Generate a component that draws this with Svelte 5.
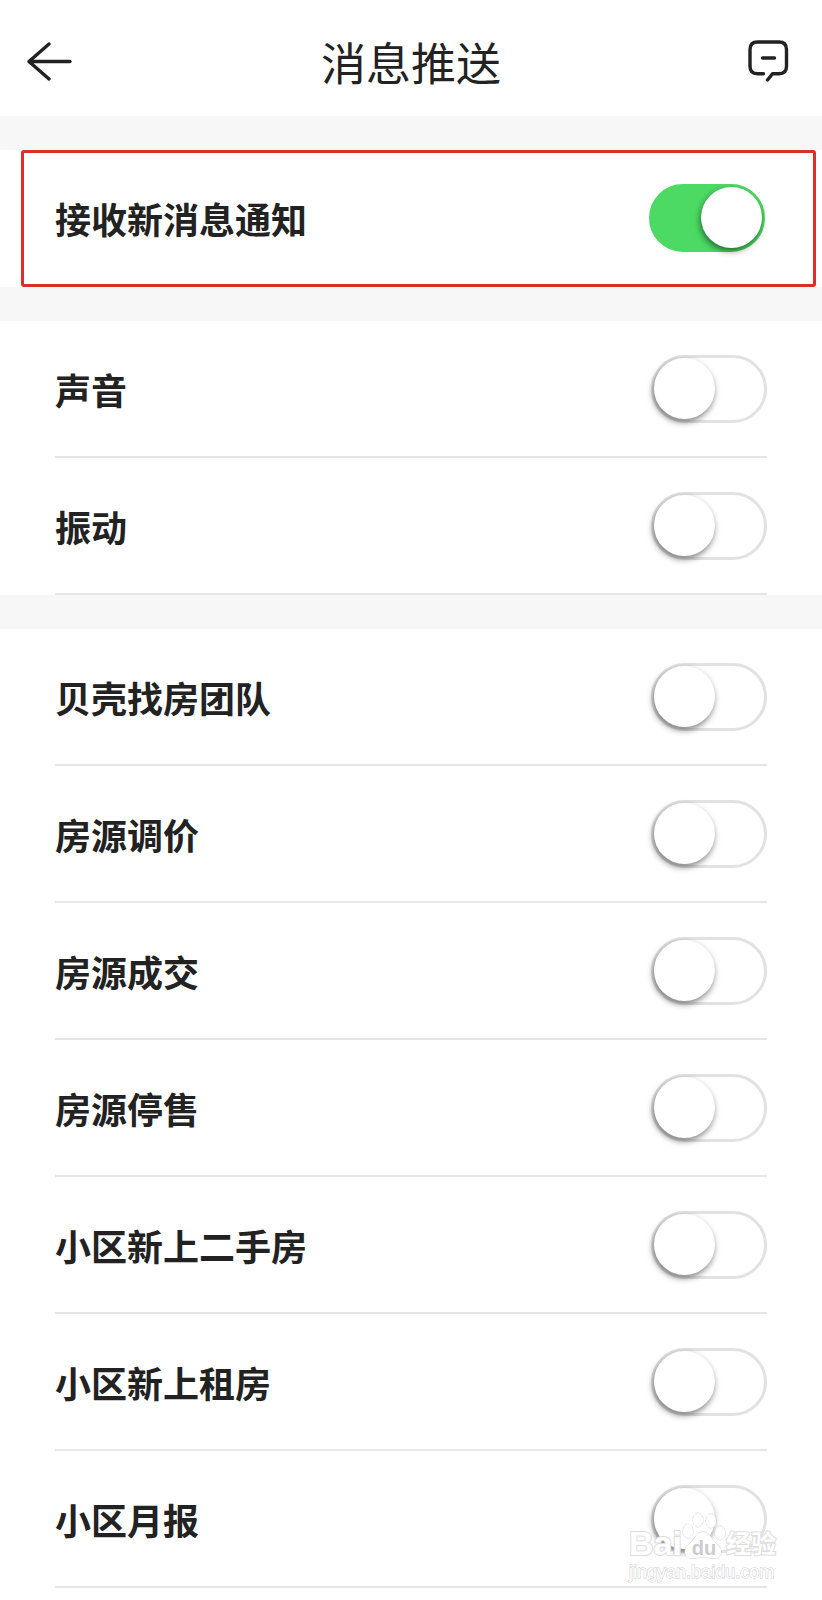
<script>
  let groups = $state([
    {
      marked: true,
      items: [{ id: 'all', label: '接收新消息通知', on: true }]
    },
    {
      items: [
        { id: 'sound', label: '声音', on: false },
        { id: 'vibrate', label: '振动', on: false }
      ]
    },
    {
      items: [
        { id: 'team', label: '贝壳找房团队', on: false },
        { id: 'price', label: '房源调价', on: false },
        { id: 'deal', label: '房源成交', on: false },
        { id: 'stop', label: '房源停售', on: false },
        { id: 'resale', label: '小区新上二手房', on: false },
        { id: 'rent', label: '小区新上租房', on: false },
        { id: 'monthly', label: '小区月报', on: false }
      ]
    }
  ])
</script>

<div class="page">
  <header>
    <button class="icon" aria-label="返回">
      <svg width="48" height="48" viewBox="0 0 48 48">
        <path d="M43 23.5H2M22 6 2 23.5 22 41" />
      </svg>
    </button>
    <h1>消息推送</h1>
    <button class="icon right" aria-label="消息">
      <svg width="48" height="48" viewBox="0 0 48 48">
        <path d="M16.5 35.7H10.5Q3 35.7 3 28.2V11.5Q3 4 10.5 4H32Q39.5 4 39.5 11.5V28.2Q39.5 35.7 32 35.7H25.5L20.5 42M15.5 20H27.5" />
      </svg>
    </button>
  </header>

  <main>
    {#each groups as group}
      <section class:marked={group.marked}>
        {#each group.items as item (item.id)}
          <div class="row">
            <label for={item.id}>{item.label}</label>
            <input id={item.id} type="checkbox" role="switch" bind:checked={item.on} />
          </div>
        {/each}
      </section>
    {/each}
  </main>

  <div class="watermark">
    <div class="brand">
      <span class="bai">Bai</span>
      <span class="paw">
        <svg width="44" height="48" viewBox="0 0 44 48">
          <ellipse cx="6" cy="19" rx="5" ry="7" />
          <ellipse cx="16" cy="8" rx="5" ry="7" />
          <ellipse cx="29" cy="9" rx="5" ry="7" />
          <ellipse cx="38" cy="21" rx="5" ry="7" />
          <path d="M21 20c5 0 7 4 10 8s9 7 8 13-7 6-11 5-9-1-14 0-11 0-11-6 5-8 8-12 5-8 10-8z" />
        </svg>
        <span class="du">du</span>
      </span>
      <span class="jy">经验</span>
    </div>
    <div class="site">jingyan.baidu.com</div>
  </div>
</div>

<style>
  :global(body) {
    margin: 0;
    background: #fff;
  }

  .page {
    position: relative;
    min-height: 100vh;
    background: #fff;
    color: #222;
    font-family: "Noto Sans CJK SC", sans-serif;
  }

  header {
    box-sizing: border-box;
    height: 116px;
    padding: 8px 27px 0;
    display: grid;
    grid-template-columns: 1fr auto 1fr;
    align-items: center;
  }

  h1 {
    margin: 0;
    font-size: 45px;
    line-height: 64px;
    font-weight: 400;
  }

  .icon {
    display: flex;
    justify-self: start;
    padding: 0;
    border: 0;
    background: none;
    cursor: pointer;
  }

  .icon.right {
    justify-self: end;
  }

  .icon path {
    fill: none;
    stroke: #222;
    stroke-width: 3.4;
    stroke-linecap: round;
    stroke-linejoin: round;
  }

  section {
    position: relative;
    padding: 0 55px;
    border-top: 34px solid #f7f7f7;
  }

  section.marked {
    padding-right: 57px;
  }

  .row {
    box-sizing: border-box;
    height: 137px;
    display: flex;
    align-items: center;
    justify-content: space-between;
    border-bottom: 2px solid #e6e6e6;
  }

  .marked .row {
    border-color: transparent;
  }

  /* red frame round the main switch */
  .marked::after {
    content: "";
    position: absolute;
    top: 0;
    right: 6px;
    bottom: 0;
    left: 21px;
    z-index: 1;
    border: 3px solid #db2f27;
    border-radius: 3px;
    pointer-events: none;
  }

  label {
    flex: 1;
    font-size: 36px;
    line-height: 52px;
    font-weight: 700;
  }

  input {
    appearance: none;
    box-sizing: border-box;
    flex: none;
    display: flex;
    align-items: center;
    width: 116px;
    height: 68px;
    margin: 0;
    border: 3px solid #e2e2e2;
    border-radius: 34px;
    background: #fff;
    cursor: pointer;
  }

  input::before {
    content: "";
    width: 61px;
    height: 61px;
    border-radius: 50%;
    background: #fff;
    box-shadow: -1px 3px 6px rgba(0, 0, 0, 0.5);
  }

  input:checked {
    justify-content: flex-end;
    border-color: #4cd964;
    background: #4cd964;
  }

  .watermark {
    position: absolute;
    right: 46px;
    bottom: 16px;
    color: #fff;
    font-family: "Liberation Sans", "Noto Sans CJK SC", sans-serif;
    -webkit-text-stroke: 2px #ddd;
    paint-order: stroke fill;
    pointer-events: none;
  }

  .brand {
    display: flex;
    align-items: flex-end;
    height: 50px;
    font-weight: 700;
  }

  .bai {
    font-size: 34px;
    line-height: 34px;
  }

  .paw {
    display: grid;
    justify-items: center;
    align-items: end;
  }

  .paw > * {
    grid-area: 1 / 1;
  }

  .paw svg {
    fill: #fff;
    stroke: #d0d0d0;
  }

  .du {
    color: #ccc;
    font-size: 20px;
    line-height: 24px;
    -webkit-text-stroke: 0;
  }

  .jy {
    font-size: 25px;
    line-height: 32px;
  }

  .site {
    font-size: 18px;
    line-height: 24px;
    -webkit-text-stroke: 1px #ccc;
  }
</style>
